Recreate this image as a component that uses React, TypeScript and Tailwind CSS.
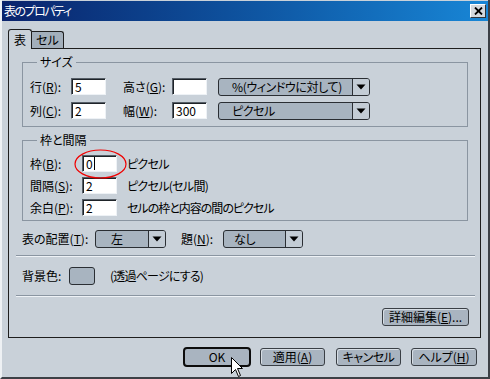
import type { ReactNode } from 'react'

const FONT = "font-['Noto_Sans_CJK_JP','Noto_Sans_CJK_SC',sans-serif] [font-feature-settings:'palt']"

function Acc({ label, k }: { label: string; k: string }) {
  return (
    <>
      {label}(<u className="underline-offset-1">{k}</u>):
    </>
  )
}

function TextBox({ children }: { children?: ReactNode }) {
  return (
    <div className="flex h-[17px] w-[35px] items-center border border-t-[#565e67] border-l-[#565e67] border-b-[#eef2f6] border-r-[#eef2f6] bg-white pl-[3px] leading-[14px] shadow-[inset_1px_1px_0_#1e2328]">
      {children}
    </div>
  )
}

function Dropdown({ text, w, pad }: { text: string; w: string; pad: string }) {
  return (
    <div className={`flex h-[18px] items-stretch rounded-[3px] border border-[#2a2e33] bg-[#a8b4c0] ${w}`}>
      <span className={`flex flex-1 items-center leading-[14px] tracking-[-0.4px] ${pad}`}>{text}</span>
      <span className="flex w-[17px] items-center justify-center rounded-r-[2px] border-l border-[#2a2e33] bg-[#c3ccd5]">
        <svg width="10" height="6" viewBox="0 0 10 6">
          <path d="M0.5 0.5 H9.5 L5 5.5 Z" fill="#000" />
        </svg>
      </span>
    </div>
  )
}

function Btn({ children, cls }: { children: ReactNode; cls: string }) {
  return (
    <div className={`flex items-center justify-center rounded-[3px] border border-[#3a3f45] bg-[#a9b4c0] leading-[14px] shadow-[inset_1px_1px_0_#d6dde4] ${cls}`}>
      {children}
    </div>
  )
}

function Separator() {
  return <div className="-ml-[6px] w-[459px] border-t border-b border-t-[#8a95a1] border-b-[#eef2f6]" />
}

export default function App() {
  return (
    <div
      className={`relative flex h-[379px] w-[490px] flex-col overflow-hidden border-l-2 border-r-2 border-b-2 border-l-[#eef1f4] border-r-[#3c4046] border-b-[#3c4046] bg-[#c9d1d9] text-[12px] text-black ${FONT}`}
    >
      {/* タイトルバー */}
      <div className="mt-[1px] flex h-[20px] items-center bg-linear-to-r from-[#0a236c] to-[#1886d6] pl-[2px]">
        <span className="leading-[14px] tracking-[-1.5px] text-white">表のプロパティ</span>
        <div className="ml-auto mr-[2px] flex h-[14px] w-[16px] items-center justify-center border border-t-white border-l-white border-b-[#30343a] border-r-[#30343a] bg-[#d3d8dd]">
          <svg width="9" height="8" viewBox="0 0 9 8">
            <path d="M1 0.5 L8 7.5 M8 0.5 L1 7.5" stroke="#000" strokeWidth="1.8" />
          </svg>
        </div>
      </div>

      {/* タブ */}
      <div className="ml-[6px] mt-[8px] flex h-[19px] items-end">
        <div className="relative z-10 -mb-px flex h-[20px] w-[24px] items-center justify-center rounded-t-[3px] border border-b-0 border-[#1e1e1e] bg-[#c9d1d9] leading-[14px]">
          表
        </div>
        <div className="flex h-[17px] w-[32px] items-center justify-center rounded-tr-[3px] border border-b-0 border-l-0 border-[#1e1e1e] bg-[#a3afbb] leading-[14px]">
          セル
        </div>
      </div>

      {/* パネル */}
      <div className="ml-[6px] flex h-[290px] w-[473px] flex-col border border-[#1e1e1e] pl-[13px] pr-[12px] pt-[7px]">
        <fieldset className="w-[446px] border border-[#8a95a1] px-[7px] pt-[10px] pb-[7px]">
          <legend className="ml-[7px] px-[3px] leading-[12px]">サイズ</legend>
          <div className="flex flex-col gap-[7px]">
            <div className="flex h-[17px] items-center">
              <span className="w-[41px] leading-[14px]"><Acc label="行" k="R" /></span>
              <TextBox>5</TextBox>
              <span className="ml-[17px] w-[49px] leading-[14px]"><Acc label="高さ" k="G" /></span>
              <TextBox />
              <div className="ml-[11px]">
                <Dropdown text="%(ウィンドウに対して)" w="w-[152px]" pad="pl-[13px]" />
              </div>
            </div>
            <div className="flex h-[17px] items-center">
              <span className="w-[41px] leading-[14px]"><Acc label="列" k="C" /></span>
              <TextBox>2</TextBox>
              <span className="ml-[17px] w-[49px] leading-[14px]"><Acc label="幅" k="W" /></span>
              <TextBox>300</TextBox>
              <div className="ml-[11px]">
                <Dropdown text="ピクセル" w="w-[152px]" pad="pl-[13px]" />
              </div>
            </div>
          </div>
        </fieldset>

        <fieldset className="mt-[7px] w-[446px] border border-[#8a95a1] px-[7px] pt-[9px] pb-[4px]">
          <legend className="ml-[7px] px-[3px] leading-[12px]">枠と間隔</legend>
          <div className="flex flex-col gap-[5px]">
            <div className="flex h-[17px] items-center">
              <span className="w-[52px] leading-[14px]"><Acc label="枠" k="B" /></span>
              <div className="relative">
                <TextBox>
                  <span>0</span>
                  <span className="ml-[1px] h-[13px] w-px bg-black" />
                </TextBox>
                <svg className="absolute -left-[8px] -top-[6px]" width="53" height="30" viewBox="0 0 53 30">
                  <ellipse cx="26.5" cy="15" rx="25.5" ry="14" fill="none" stroke="#f00000" strokeWidth="1.2" />
                </svg>
              </div>
              <span className="ml-[10px] leading-[14px] tracking-[-0.7px]">ピクセル</span>
            </div>
            <div className="flex h-[17px] items-center">
              <span className="w-[52px] leading-[14px]"><Acc label="間隔" k="S" /></span>
              <TextBox>2</TextBox>
              <span className="ml-[10px] leading-[14px] tracking-[-0.7px]">ピクセル(セル間)</span>
            </div>
            <div className="flex h-[17px] items-center">
              <span className="w-[52px] leading-[14px]"><Acc label="余白" k="P" /></span>
              <TextBox>2</TextBox>
              <span className="ml-[10px] leading-[14px] tracking-[-1px]">セルの枠と内容の間のピクセル</span>
            </div>
          </div>
        </fieldset>

        <div className="mt-[9px] flex h-[18px] items-center">
          <span className="w-[73px] leading-[14px]"><Acc label="表の配置" k="T" /></span>
          <Dropdown text="左" w="w-[71px]" pad="pl-[15px]" />
          <span className="ml-[15px] w-[42px] leading-[14px]"><Acc label="題" k="N" /></span>
          <Dropdown text="なし" w="w-[80px]" pad="pl-[10px]" />
        </div>

        <div className="mt-[7px]">
          <Separator />
        </div>

        <div className="mt-[10px] flex h-[18px] items-center">
          <span className="w-[47px] leading-[14px]">背景色:</span>
          <div className="h-[18px] w-[26px] rounded-[3px] border border-[#2a2e33] bg-[#a8b4c0]" />
          <span className="ml-[15px] leading-[14px] tracking-[-0.8px]">(透過ページにする)</span>
        </div>

        <div className="mt-[10px]">
          <Separator />
        </div>

        <div className="mt-[11px] flex justify-end">
          <Btn cls="-mr-[1px] h-[18px] w-[87px]">
            詳細編集(<u className="underline-offset-1">E</u>)...
          </Btn>
        </div>
      </div>

      {/* ボタン */}
      <div className="mt-[9px] flex h-[20px] items-center">
        <div className="ml-[181px] flex h-[20px] w-[68px] items-center justify-center rounded-[4px] border-2 border-[#0c0c0c] bg-[#a9b4c0] leading-[14px]">
          OK
        </div>
        <Btn cls="ml-[9px] h-[18px] w-[65px]">
          適用(<u className="underline-offset-1">A</u>)
        </Btn>
        <Btn cls="ml-[11px] h-[18px] w-[65px] tracking-[-0.5px]">キャンセル</Btn>
        <Btn cls="ml-[10px] h-[18px] w-[66px]">
          ヘルプ(<u className="underline-offset-1">H</u>)
        </Btn>
      </div>

      {/* マウスカーソル */}
      <svg className="absolute left-[228px] top-[356px]" width="14" height="23" viewBox="0 0 14 23">
        <path
          d="M1.5 1.5 V17.5 L5.5 13.5 L8.5 20.5 L10.5 19.5 L7.5 12.5 H12.5 Z"
          fill="#fff"
          stroke="#000"
          strokeWidth="1"
          strokeLinejoin="miter"
        />
      </svg>
    </div>
  )
}
